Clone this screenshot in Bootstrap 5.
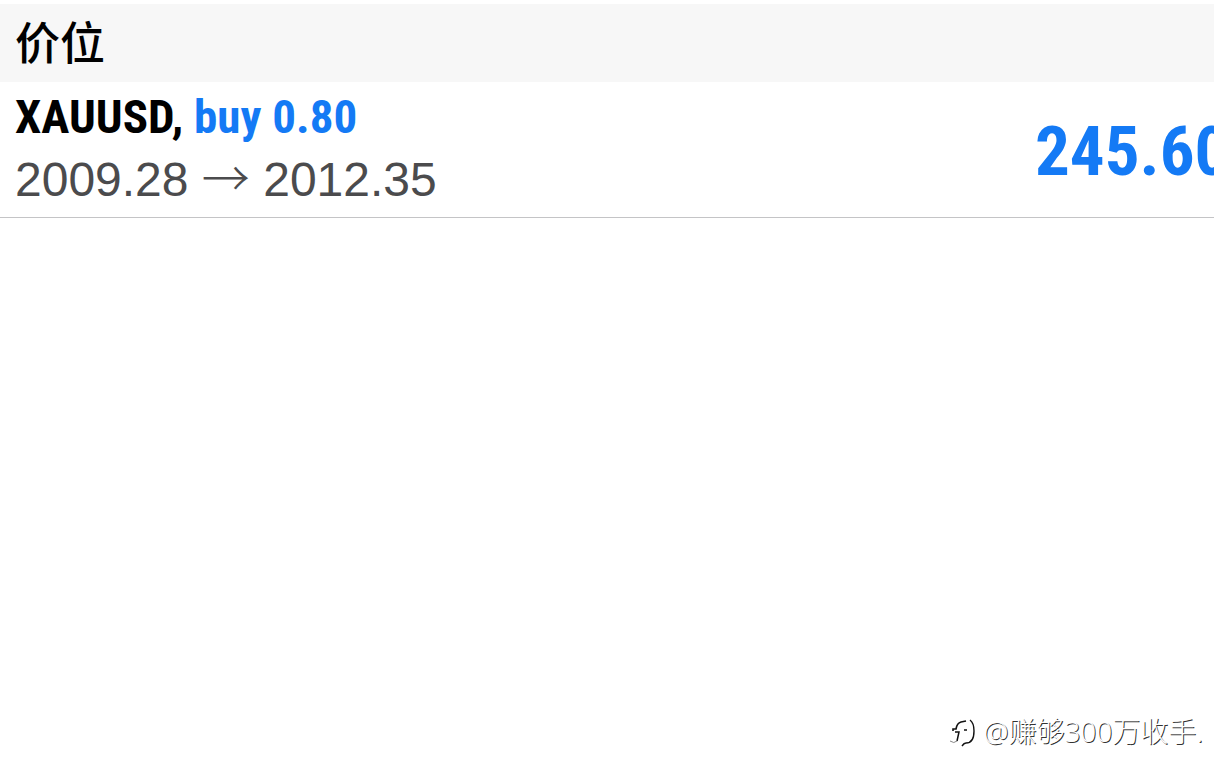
<!DOCTYPE html>
<html lang="zh-CN">
<head>
<meta charset="utf-8">
<meta name="viewport" content="width=device-width, initial-scale=1">
<title>价位</title>
<link rel="stylesheet" href="https://cdn.jsdelivr.net/npm/bootstrap@5.3.0/dist/css/bootstrap.min.css">
<style>
  body { font-family: "Liberation Sans", "Noto Sans CJK SC", sans-serif; color: #000; }
  .section-head { margin-top: 4px; padding: 6px 15px 10px; background: #f7f7f7; }
  .section-title { font: 500 45px/62px "Noto Sans CJK SC", sans-serif; }
  .position-row { padding: 3px 0 6px 15px; border-bottom: 1px solid #c4c4c6; }
  .symbol, .profit { font-family: "Roboto Condensed", "Liberation Sans", sans-serif; font-weight: 700; }
  .symbol { font-size: 47px; line-height: 64px; }
  .profit { font-size: 69px; line-height: 80px; width: 179px; margin-top: 8px; white-space: nowrap; }
  .buy { color: #147af5; }
  .prices { font-size: 48px; line-height: 62px; color: #4b4b4d; }
  .arrow { font-family: "Noto Sans CJK SC", sans-serif; font-weight: 300; line-height: 1; }
  .watermark { padding: 0 11px 28px 0; font: 300 28px/40px "Open Sans", "Noto Sans CJK SC", sans-serif; color: #fff; text-shadow: 1px 1px 0 #333; }
</style>
</head>
<body class="d-flex flex-column min-vh-100 bg-white overflow-hidden">
<header class="section-head"><h1 class="section-title m-0">价位</h1></header>
<main class="position-row d-flex align-items-center justify-content-between">
  <div>
    <div class="symbol">XAUUSD, <span class="buy">buy 0.80</span></div>
    <div class="prices">2009.28 <span class="arrow">→</span> 2012.35</div>
  </div>
  <div class="profit buy flex-shrink-0">245.60</div>
</main>
<footer class="watermark mt-auto d-flex justify-content-end align-items-center gap-2">
  <svg width="26" height="34" viewBox="0 0 26 34" fill="none" aria-hidden="true">
    <path d="M3 17v-2h3q1-6 5-7l5-1" stroke="#111" stroke-width="1.6"/>
    <path d="M5 18h4L7 27M14 16h3" stroke="#111" stroke-width="1.5"/>
    <path d="M7 27q-3 3-7 0" stroke="#888"/>
    <path d="M20 6q4 3 4 11 0 12-8 12-2 0-4 3" stroke="#111" stroke-width="1.4"/>
  </svg>
  <span>@赚够300万收手.</span>
</footer>
<script src="https://cdn.jsdelivr.net/npm/bootstrap@5.3.0/dist/js/bootstrap.bundle.min.js"></script>
</body>
</html>
